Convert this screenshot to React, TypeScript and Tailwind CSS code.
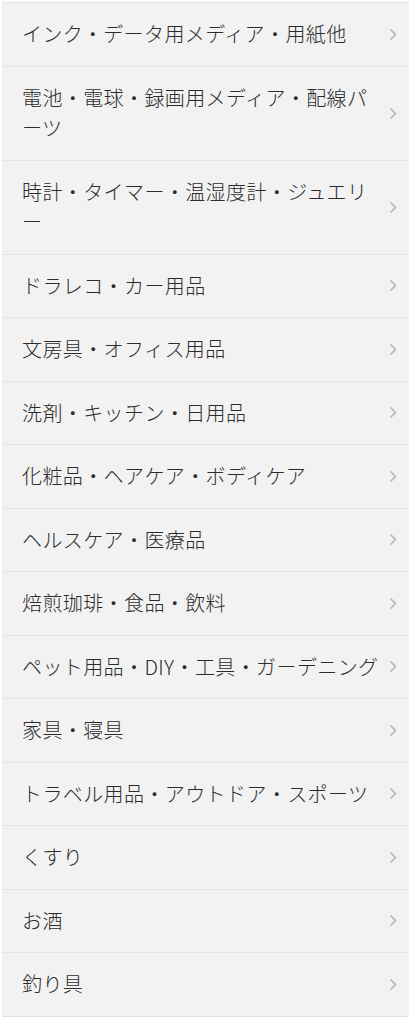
const items: string[][] = [
  ['インク・データ用メディア・用紙他'],
  ['電池・電球・録画用メディア・配線パ', 'ーツ'],
  ['時計・タイマー・温湿度計・ジュエリ', 'ー'],
  ['ドラレコ・カー用品'],
  ['文房具・オフィス用品'],
  ['洗剤・キッチン・日用品'],
  ['化粧品・ヘアケア・ボディケア'],
  ['ヘルスケア・医療品'],
  ['焙煎珈琲・食品・飲料'],
  ['ペット用品・DIY・工具・ガーデニング'],
  ['家具・寝具'],
  ['トラベル用品・アウトドア・スポーツ'],
  ['くすり'],
  ['お酒'],
  ['釣り具'],
];

function Chevron() {
  return (
    <svg width="8" height="13" viewBox="0 0 8 13" className="shrink-0">
      <path d="M1.5 1.5 L6.5 6.5 L1.5 11.5" fill="none" stroke="#b3b3b3" strokeWidth="1.5" />
    </svg>
  );
}

export default function App() {
  return (
    <div
      className="min-h-screen bg-white pt-[2px] pl-[2px] pr-[3px]"
      style={{ fontFamily: '"Noto Sans CJK JP", "Noto Sans", sans-serif' }}
    >
      <ul className="bg-[#f2f2f2] border-t border-[#e3e3e3]">
        {items.map((lines, i) => (
          <li
            key={i}
            className="flex items-center justify-between border-b border-[#e3e3e3] pl-5 pr-[12px] py-4"
          >
            <div className="text-[20px] leading-[30.5px] font-light text-[#2b2b2b] whitespace-nowrap tracking-[0.4px]">
              {lines.map((l, j) => (
                <div key={j}>{l}</div>
              ))}
            </div>
            <Chevron />
          </li>
        ))}
      </ul>
    </div>
  );
}
